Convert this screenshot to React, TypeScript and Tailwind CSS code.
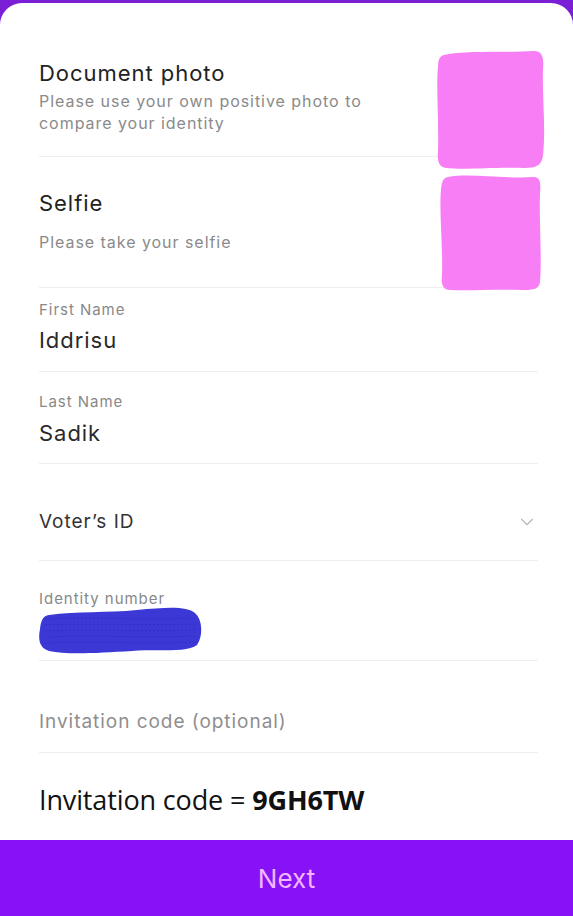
import { ChevronDown } from 'lucide-react';

const sans = { fontFamily: 'Inter, "Liberation Sans", Arial, sans-serif' };

function Divider() {
  return <div className="ml-[39px] mr-[35px] h-px bg-[#eeeeee]" />;
}

function PinkBlobs() {
  return (
    <svg className="absolute left-[434px] top-[44px]" width="116" height="248" viewBox="0 0 116 248">
      <path
        d="M10 8 C30 3 70 6 100 4 C108 4 110 10 109 22 C108 50 112 80 109 108 C108 118 103 121 90 121 C60 120 30 123 12 121 C5 120 3 114 4 104 C5 74 2 40 4 20 C4 12 6 9 10 8 Z"
        fill="#f77ef4"
      />
      <path
        d="M14 130 C35 126 70 132 100 130 C106 130 107 136 106 146 C105 175 108 210 106 235 C105 242 100 243 88 243 C60 242 35 244 16 243 C9 243 7 238 8 228 C9 200 5 165 7 142 C8 134 9 131 14 130 Z"
        fill="#f77ef4"
      />
    </svg>
  );
}

function BlueScribble() {
  return (
    <svg className="absolute left-[37px] top-[602px]" width="168" height="52" viewBox="0 0 168 52">
      <path
        d="M12 10 C40 6 70 8 100 5 C130 2 150 1 158 8 C166 15 166 32 160 40 C150 48 120 44 95 46 C60 48 30 50 12 46 C2 43 1 34 3 24 C4 15 6 11 12 10 Z"
        fill="#3b38d6"
      />
      {[14, 20, 26, 32, 38].map((y) => (
        <path
          key={y}
          d={`M8 ${y} C50 ${y - 2} 110 ${y + 1} 160 ${y - 1}`}
          stroke="#2a28b8"
          strokeWidth="1"
          strokeDasharray="2 2"
          fill="none"
          opacity="0.6"
        />
      ))}
    </svg>
  );
}

export default function App() {
  return (
    <div className="w-[573px] h-[916px] bg-[#7a1fd6] pt-[3px] flex flex-col overflow-hidden" style={sans}>
      <div className="relative flex-1 bg-white rounded-t-[22px] flex flex-col tracking-[0.06em]">
        <div className="px-[39px] pt-[56px] pb-[22px]">
          <div className="text-[22px] leading-[28px] text-[#222]">Document photo</div>
          <div className="mt-[3px] text-[16px] leading-[22px] text-[#8a8a8a]">
            Please use your own positive photo to
            <br />
            compare your identity
          </div>
        </div>
        <Divider />

        <div className="px-[39px] pt-[32px] pb-[34px]">
          <div className="text-[22px] leading-[28px] text-[#222]">Selfie</div>
          <div className="mt-[14px] text-[16px] leading-[22px] text-[#8a8a8a]">Please take your selfie</div>
        </div>
        <Divider />

        <div className="px-[39px] pt-[12px] pb-[17px]">
          <div className="text-[15px] leading-[20px] text-[#888]">First Name</div>
          <div className="mt-[6px] text-[22px] leading-[28px] text-[#2a2a2a]">Iddrisu</div>
        </div>
        <Divider />

        <div className="px-[39px] pt-[20px] pb-[16px]">
          <div className="text-[15px] leading-[20px] text-[#888]">Last Name</div>
          <div className="mt-[7px] text-[22px] leading-[28px] text-[#2a2a2a]">Sadik</div>
        </div>
        <Divider />

        <div className="pl-[39px] pr-[35px] pt-[45px] pb-[25px] flex items-center justify-between">
          <div className="text-[19px] leading-[26px] text-[#333]">Voter’s ID</div>
          <ChevronDown size={22} strokeWidth={1.2} className="text-[#b5b5b5]" />
        </div>
        <Divider />

        <div className="px-[39px] pt-[28px] h-[99px]">
          <div className="text-[15px] leading-[20px] text-[#888]">Identity number</div>
        </div>
        <Divider />

        <div className="px-[39px] pt-[48px] pb-[17px]">
          <div className="text-[19px] leading-[26px] text-[#8e8e8e]">Invitation code (optional)</div>
        </div>
        <Divider />

        <div
          className="px-[39px] pt-[31px] pb-[24px] text-[27px] leading-[32px] text-[#111] tracking-[-0.005em]"
          style={{ fontFamily: '"Open Sans", "Noto Sans", sans-serif' }}
        >
          Invitation code = <span className="font-bold">9GH6TW</span>
        </div>

        <div className="mt-auto h-[76px] bg-[#8612f5] flex items-center justify-center">
          <span className="text-[26px] text-[#f2b6ff] tracking-normal">Next</span>
        </div>

        <PinkBlobs />
        <BlueScribble />
      </div>
    </div>
  );
}
